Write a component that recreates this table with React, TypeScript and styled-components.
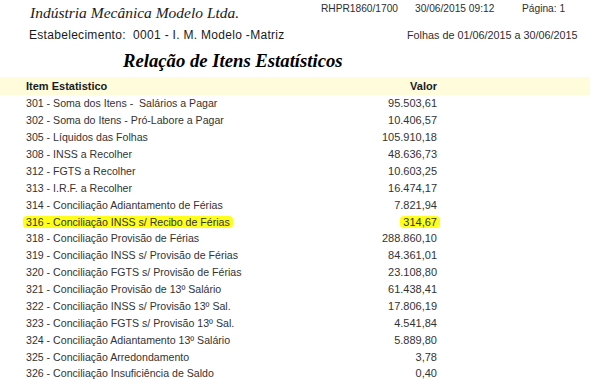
import React from 'react'
import styled, { createGlobalStyle } from 'styled-components'

const GlobalStyle = createGlobalStyle`
  html, body {
    margin: 0;
    padding: 0;
    background: #ffffff;
  }
  body {
    width: 605px;
    height: 379px;
    overflow: hidden;
    font-family: 'Liberation Sans', Arial, sans-serif;
    color: #333333;
  }
`

const items = [
  { label: '301 - Soma dos Itens -  Salários a Pagar', value: '95.503,61' },
  { label: '302 - Soma do Itens - Pró-Labore a Pagar', value: '10.406,57' },
  { label: '305 - Líquidos das Folhas', value: '105.910,18' },
  { label: '308 - INSS a Recolher', value: '48.636,73' },
  { label: '312 - FGTS a Recolher', value: '10.603,25' },
  { label: '313 - I.R.F. a Recolher', value: '16.474,17' },
  { label: '314 - Conciliação Adiantamento de Férias', value: '7.821,94' },
  { label: '316 - Conciliação INSS s/ Recibo de Férias', value: '314,67', marked: true },
  { label: '318 - Conciliação Provisão de Férias', value: '288.860,10' },
  { label: '319 - Conciliação INSS s/ Provisão de Férias', value: '84.361,01' },
  { label: '320 - Conciliação FGTS s/ Provisão de Férias', value: '23.108,80' },
  { label: '321 - Conciliação Provisão de 13º Salário', value: '61.438,41' },
  { label: '322 - Conciliação INSS s/ Provisão 13º Sal.', value: '17.806,19' },
  { label: '323 - Conciliação FGTS s/ Provisão 13º Sal.', value: '4.541,84' },
  { label: '324 - Conciliação Adiantamento 13º Salário', value: '5.889,80' },
  { label: '325 - Conciliação Arredondamento', value: '3,78' },
  { label: '326 - Conciliação Insuficiência de Saldo', value: '0,40' },
]

const Page = styled.div`
  width: 605px;
  padding-top: 3px;
`

const TopLine = styled.div`
  display: flex;
  align-items: flex-start;
  height: 25px;
`

const Company = styled.div`
  font-family: 'Liberation Serif', 'Times New Roman', serif;
  font-style: italic;
  font-size: 15.5px;
  line-height: 20px;
  color: #1a1a1a;
  margin-left: 30px;
  width: 291px;
  white-space: nowrap;
`

const Meta = styled.span<{ $w: number }>`
  font-size: 10.2px;
  line-height: 12px;
  color: #2e2e2e;
  width: ${({ $w }) => $w}px;
  white-space: nowrap;
`

const SecondLine = styled.div`
  display: flex;
  align-items: baseline;
  height: 16px;
`

const Establishment = styled.div`
  font-size: 12px;
  letter-spacing: 0.3px;
  line-height: 14px;
  color: #1a1a1a;
  margin-left: 29px;
  width: 378px;
  white-space: pre;
`

const Period = styled.div`
  font-size: 10.8px;
  line-height: 13px;
  color: #2e2e2e;
  white-space: nowrap;
`

const Title = styled.h1`
  margin: 6px 0 0 123px;
  font-family: 'Liberation Serif', 'Times New Roman', serif;
  font-style: italic;
  font-weight: bold;
  font-size: 18.7px;
  line-height: 22px;
  color: #000000;
`

const Table = styled.div`
  width: 590px;
  margin-top: 5px;
`

const Row = styled.div<{ $head?: boolean }>`
  display: grid;
  grid-template-columns: 1fr auto;
  align-items: center;
  height: ${({ $head }) => ($head ? 18 : 16.875)}px;
  padding: 0 153px 0 26px;
  background: ${({ $head }) => ($head ? '#fffcdc' : 'transparent')};
  font-weight: ${({ $head }) => ($head ? 'bold' : 'normal')};
  color: ${({ $head }) => ($head ? '#1a1a1a' : '#333333')};
`

const Cell = styled.span<{ $marked?: boolean; $right?: boolean; $head?: boolean }>`
  justify-self: ${({ $right }) => ($right ? 'end' : 'start')};
  font-size: ${({ $right, $head }) => ($right || $head ? 11 : 10.6)}px;
  white-space: pre;
  line-height: 12px;
  padding: 0 3px;
  margin: 0 -3px;
  border-radius: 4px;
  background: ${({ $marked }) => ($marked ? '#ffff1a' : 'transparent')};
`

export default function App() {
  return (
    <Page>
      <GlobalStyle />
      <TopLine>
        <Company>Indústria Mecânica Modelo Ltda.</Company>
        <Meta $w={94}>RHPR1860/1700</Meta>
        <Meta $w={107}>30/06/2015 09:12</Meta>
        <Meta $w={60}>Página: 1</Meta>
      </TopLine>
      <SecondLine>
        <Establishment>Estabelecimento:  0001 - I. M. Modelo -Matriz</Establishment>
        <Period>Folhas de 01/06/2015 a 30/06/2015</Period>
      </SecondLine>
      <Title>Relação de Itens Estatísticos</Title>
      <Table>
        <Row $head>
          <Cell $head>Item Estatistico</Cell>
          <Cell $head $right>Valor</Cell>
        </Row>
        {items.map(item => (
          <Row key={item.label}>
            <Cell $marked={item.marked}>{item.label}</Cell>
            <Cell $right $marked={item.marked}>{item.value}</Cell>
          </Row>
        ))}
      </Table>
    </Page>
  )
}
